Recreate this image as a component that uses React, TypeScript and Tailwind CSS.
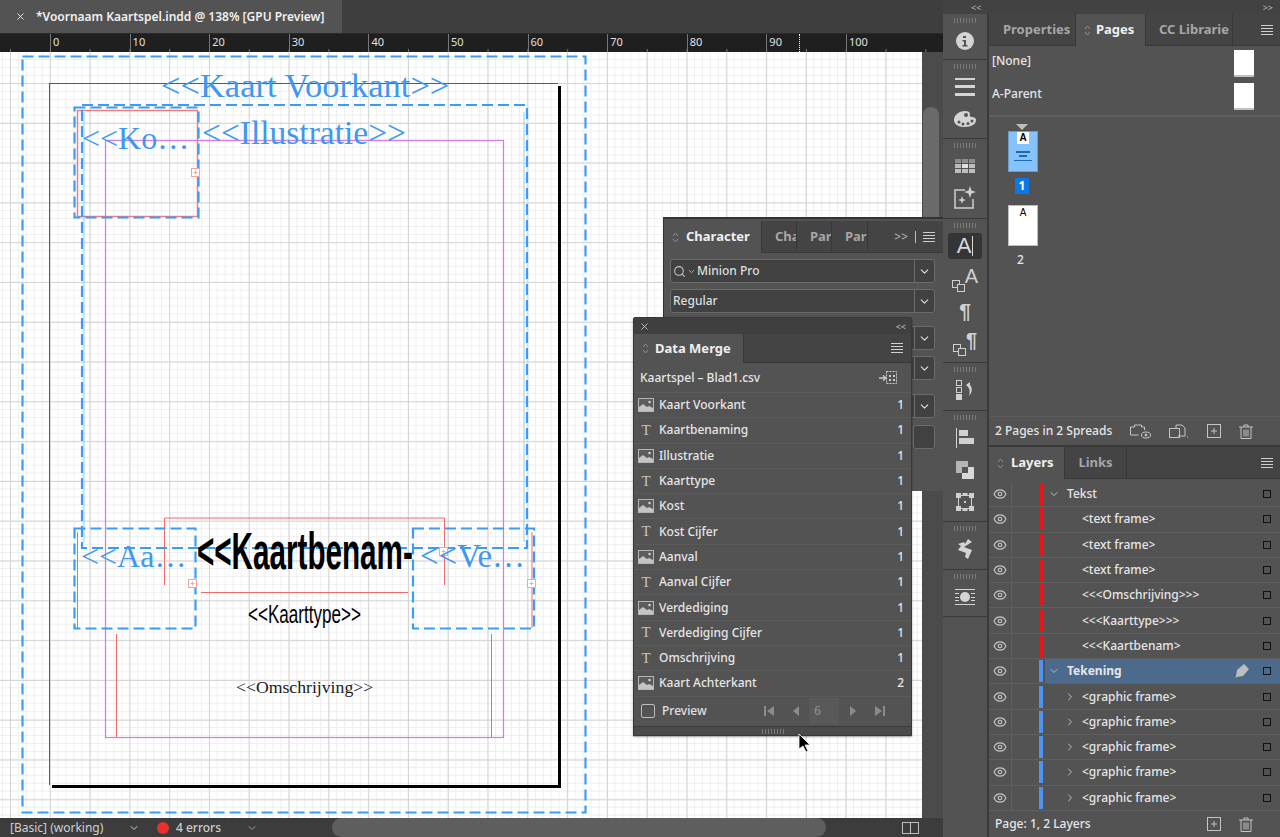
import { ChevronDown, ChevronRight, Eye, Search, X } from 'lucide-react';
import type { ReactNode } from 'react';

const rulerMarks = [0, 10, 20, 30, 40, 50, 60, 70, 80, 90, 100];

const mergeFields = [
  { name: 'Kaart Voorkant', kind: 'image', count: 1 },
  { name: 'Kaartbenaming', kind: 'text', count: 1 },
  { name: 'Illustratie', kind: 'image', count: 1 },
  { name: 'Kaarttype', kind: 'text', count: 1 },
  { name: 'Kost', kind: 'image', count: 1 },
  { name: 'Kost Cijfer', kind: 'text', count: 1 },
  { name: 'Aanval', kind: 'image', count: 1 },
  { name: 'Aanval Cijfer', kind: 'text', count: 1 },
  { name: 'Verdediging', kind: 'image', count: 1 },
  { name: 'Verdediging Cijfer', kind: 'text', count: 1 },
  { name: 'Omschrijving', kind: 'text', count: 1 },
  { name: 'Kaart Achterkant', kind: 'image', count: 2 },
];

const layers = [
  { name: 'Tekst', color: 'bg-[#e8161b]', level: 0, open: true },
  { name: '<text frame>', color: 'bg-[#e8161b]', level: 1 },
  { name: '<text frame>', color: 'bg-[#e8161b]', level: 1 },
  { name: '<text frame>', color: 'bg-[#e8161b]', level: 1 },
  { name: '<<<Omschrijving>>>', color: 'bg-[#e8161b]', level: 1 },
  { name: '<<<Kaarttype>>>', color: 'bg-[#e8161b]', level: 1 },
  { name: '<<<Kaartbenam>', color: 'bg-[#e8161b]', level: 1 },
  { name: 'Tekening', color: 'bg-[#4f94f0]', level: 0, open: true, active: true },
  { name: '<graphic frame>', color: 'bg-[#4f94f0]', level: 1, closed: true },
  { name: '<graphic frame>', color: 'bg-[#4f94f0]', level: 1, closed: true },
  { name: '<graphic frame>', color: 'bg-[#4f94f0]', level: 1, closed: true },
  { name: '<graphic frame>', color: 'bg-[#4f94f0]', level: 1, closed: true },
  { name: '<graphic frame>', color: 'bg-[#4f94f0]', level: 1, closed: true },
];

function Menu() {
  return (
    <div className="flex flex-col gap-[2px]">
      <div className="h-px w-3 bg-[#cfcfcf]" />
      <div className="h-px w-3 bg-[#cfcfcf]" />
      <div className="h-px w-3 bg-[#cfcfcf]" />
      <div className="h-px w-3 bg-[#cfcfcf]" />
    </div>
  );
}

function UpDown() {
  return (
    <svg width="7" height="11" viewBox="0 0 7 11" fill="none" stroke="#8f8f8f" strokeWidth="1">
      <path d="M1 4l2.5-3L6 4M1 7l2.5 3L6 7" />
    </svg>
  );
}

function Grip() {
  return <div className="h-[5px] w-[22px] shrink-0 bg-[repeating-linear-gradient(90deg,#7a7a7a_0_1px,transparent_1px_3px)]" />;
}

function ImageIcon() {
  return (
    <svg width="16" height="14" viewBox="0 0 16 14">
      <rect x="0.5" y="0.5" width="15" height="13" fill="#5c5c5c" stroke="#b5b5b5" />
      <path d="M1 13V9l4-3 4 3 2-1 4 2v3z" fill="#c4c4c4" />
      <circle cx="11.5" cy="4" r="1.2" fill="#d8d8d8" />
    </svg>
  );
}

function PanelTab({ children, active, className }: { children: ReactNode; active?: boolean; className: string }) {
  return (
    <div
      className={`flex h-full items-center border-r border-[#383838] text-[13px] font-bold ${
        active ? 'bg-[#535353] text-[#efefef]' : 'border-b bg-[#444444] text-[#a6a6a6]'
      } ${className}`}
    >
      {children}
    </div>
  );
}

function SelectBox({ children }: { children?: ReactNode }) {
  return (
    <div className="flex h-6 items-center rounded-[3px] border border-[#6b6b6b] bg-[#414141] text-xs text-[#dedede]">
      <div className="flex flex-1 items-center gap-[1px] overflow-hidden px-[2px]">{children}</div>
      <div className="flex h-full w-[20px] items-center justify-center border-l border-[#6b6b6b]">
        <ChevronDown size={13} className="text-[#e0e0e0]" />
      </div>
    </div>
  );
}

function Artwork() {
  return (
    <div className="absolute -top-[52px] left-0 h-[837px] w-[922px]">
      <div className="absolute left-[49px] top-[83px] h-[702px] w-[509px] border-l border-t border-[#5b5b5b] shadow-[3px_3px_0_0_#000]" />
      <svg className="absolute left-0 top-0" width="922" height="837" fill="none">
        <rect x="105.5" y="140.5" width="398" height="597" stroke="#d27ae8" strokeWidth="1.2" />
        <path d="M116.5 634v103M491.5 634v103" stroke="#ef6a6a" />
        <path d="M164.5 585v-67h280v67M201 592.5h207" stroke="#ef6a6a" />
        <path d="M84 112v430M524 112v430" stroke="#9cc8f5" />
        <rect x="77.5" y="110.5" width="120" height="106" stroke="#f47c7c" strokeWidth="1.5" />
        <path d="M77.5 532v96M532 532v96" stroke="#ef6a6a" />
        <g stroke="#3a9cf7" strokeWidth="2.2" strokeDasharray="11 5">
          <rect x="22.5" y="56.5" width="563" height="756" />
          <rect x="82" y="105" width="445" height="443" />
          <rect x="74.5" y="107.5" width="124" height="110" />
          <rect x="74.5" y="528.5" width="121" height="100" />
          <rect x="413" y="528.5" width="121" height="100" />
        </g>
        <g fill="#fff" stroke="#f5a3a3">
          <rect x="191.5" y="168.5" width="8" height="8" />
          <rect x="188.5" y="579.5" width="8" height="8" />
          <rect x="527.5" y="579.5" width="8" height="8" />
          <rect x="439.5" y="547.5" width="8" height="8" />
          <path d="M195.5 170.5v4M193.5 172.5h4M192.500 581.500v4M190.500 583.500h4M531.500 581.500v4M529.500 583.500h4M443.500 549.500v4M441.500 551.500h4" />
        </g>
      </svg>
      <div className="absolute left-[161px] top-[66px] whitespace-nowrap font-['Liberation_Serif',serif] text-[34.5px] leading-[38px] text-[#3f98f0]">
        {'<<Kaart Voorkant>>'}
      </div>
      <div className="absolute left-[82px] top-[119px] whitespace-nowrap font-['Liberation_Serif',serif] text-[32px] leading-[38px] text-[#3f98f0]">
        {'<<Ko…'}
      </div>
      <div className="absolute left-[202px] top-[114px] whitespace-nowrap font-['Liberation_Serif',serif] text-[33.5px] leading-[38px] text-[#3f98f0]">
        {'<<Illustratie>>'}
      </div>
      <div className="absolute left-[81px] top-[537px] whitespace-nowrap font-['Liberation_Serif',serif] text-[32px] leading-[38px] text-[#3f98f0]">
        {'<<Aa…'}
      </div>
      <div className="absolute left-[420px] top-[537px] whitespace-nowrap font-['Liberation_Serif',serif] text-[33px] leading-[38px] text-[#3f98f0]">
        {'<<Ve…'}
      </div>
      <div className="absolute left-[197px] top-[523px] origin-left scale-x-[0.57] whitespace-nowrap font-['Liberation_Sans',sans-serif] text-[52px] font-bold leading-[56px] text-black">
        {'<<Kaartbenam-'}
      </div>
      <div className="absolute left-[248px] top-[601px] origin-left scale-x-[0.656] whitespace-nowrap font-['Liberation_Sans',sans-serif] text-[26px] leading-[26px] text-black">
        {'<<Kaarttype>>'}
      </div>
      <div className="absolute left-[236px] top-[677px] whitespace-nowrap font-['Liberation_Serif',serif] text-[17.7px] leading-[20px] text-[#1a1a1a]">
        {'<<Omschrijving>>'}
      </div>
    </div>
  );
}

function CharacterPanel() {
  return (
    <div className="absolute left-[663px] top-[217px] h-[274px] w-[280px] border-l border-t-2 border-[#333333] bg-[#535353] pt-[2px] font-['Noto_Sans',sans-serif]">
      <div className="flex h-[32px] bg-[#444444]">
        <PanelTab active className="w-[98px] gap-[7px] pl-2">
          <UpDown />
          <span>Character</span>
        </PanelTab>
        <PanelTab className="w-[35px] overflow-hidden pl-[13px]">Cha</PanelTab>
        <PanelTab className="w-[35px] overflow-hidden pl-[13px]">Par</PanelTab>
        <PanelTab className="w-[36px] overflow-hidden pl-[13px]">Par</PanelTab>
        <div className="flex flex-1 items-center justify-end gap-[7px] border-b border-[#383838] pr-2 text-xs text-[#bdbdbd]">
          <span>{'>>'}</span>
          <div className="h-3 w-px bg-[#bdbdbd]" />
          <Menu />
        </div>
      </div>
      <div className="flex flex-col gap-[6px] pl-[6px] pr-[8px] pt-[6px]">
        <SelectBox>
          <Search size={13} className="shrink-0 text-[#c8c8c8]" />
          <ChevronDown size={9} className="shrink-0 text-[#c8c8c8]" />
          <span className="font-medium">Minion Pro</span>
        </SelectBox>
        <SelectBox>
          <span className="font-medium">Regular</span>
        </SelectBox>
      </div>
      <div className="absolute right-[8px] top-[107px] flex flex-col gap-[6px]">
        <SelectBox />
        <SelectBox />
      </div>
      <div className="absolute right-[8px] top-[175px]">
        <SelectBox />
      </div>
      <div className="absolute right-[8px] top-[206px] h-6 w-[22px] rounded-[3px] border border-[#6b6b6b] bg-[#414141]" />
    </div>
  );
}

function DataMergePanel() {
  return (
    <div className="absolute left-[633px] top-[317px] flex h-[419px] w-[279px] flex-col rounded-t-[2px] border border-[#383838] bg-[#535353] font-['Noto_Sans',sans-serif] shadow-[0_1px_2px_rgba(0,0,0,0.4)]">
      <div className="flex h-[16px] items-center justify-between bg-[#3f3f3f] px-[5px] text-[#c4c4c4]">
        <X size={11} />
        <span className="text-[9px] leading-none">{'<<'}</span>
      </div>
      <div className="flex h-[29px] bg-[#444444]">
        <PanelTab active className="w-[110px] gap-[6px] pl-2">
          <UpDown />
          <span>Data Merge</span>
        </PanelTab>
        <div className="flex flex-1 items-center justify-end border-b border-[#383838] pr-2">
          <Menu />
        </div>
      </div>
      <div className="flex h-[30px] items-center justify-between border-b border-[#5c5c5c] pl-[6px] pr-[14px] text-xs font-medium text-[#e6e6e6]">
        <span>Kaartspel – Blad1.csv</span>
        <svg width="18" height="13" viewBox="0 0 18 13" fill="none" stroke="#c8c8c8">
          <path d="M0 7h6M4 4.5L7 7l-3 2.5" strokeWidth="1.5" />
          <rect x="7.5" y="0.5" width="10" height="12" strokeDasharray="2 1" />
          <path d="M10 4h2v2h-2zM14 4h2v2h-2zM10 8h2v2h-2zM14 8h2v2h-2z" fill="#c8c8c8" stroke="none" />
        </svg>
      </div>
      {mergeFields.map((field) => (
        <div
          key={field.name}
          className="flex h-[25.3px] shrink-0 items-center border-b border-[#5a5a5a] pl-[4px] pr-[7px] text-xs font-medium text-[#e6e6e6]"
        >
          <div className="flex w-[21px] justify-start">
            {field.kind === 'image' ? (
              <ImageIcon />
            ) : (
              <span className="w-4 text-center font-['Liberation_Serif',serif] text-[15px] leading-none text-[#c4c4c4]">T</span>
            )}
          </div>
          <span className="flex-1">{field.name}</span>
          <span>{field.count}</span>
        </div>
      ))}
      <div className="flex flex-1 items-center pl-[7px] text-xs font-medium text-[#e0e0e0]">
        <div className="h-[14px] w-[14px] rounded-[2px] border border-[#bdbdbd]" />
        <span className="ml-[7px] w-[61px]">Preview</span>
        <div className="ml-[40px] flex items-center text-[#8b8b8b]">
          <svg width="12" height="10" viewBox="0 0 12 10" fill="#8b8b8b">
            <path d="M1 0h2v10H1zM11 0v10L4 5z" />
          </svg>
          <svg className="ml-[17px]" width="8" height="10" viewBox="0 0 8 10" fill="#8b8b8b">
            <path d="M7 0v10L1 5z" />
          </svg>
          <div className="ml-[9px] flex h-[26px] w-[30px] items-center bg-[#595959] pl-[5px]">6</div>
          <svg className="ml-[10px]" width="8" height="10" viewBox="0 0 8 10" fill="#8b8b8b">
            <path d="M1 0v10l6-5z" />
          </svg>
          <svg className="ml-[17px]" width="12" height="10" viewBox="0 0 12 10" fill="#8b8b8b">
            <path d="M9 0h2v10H9zM1 0v10l7-5z" />
          </svg>
        </div>
      </div>
      <div className="flex h-[9px] items-center justify-center border-t border-[#3a3a3a] bg-[#4a4a4a]">
        <Grip />
      </div>
    </div>
  );
}

const stripIcons: { h: string; icons: ReactNode[] }[] = [
  {
    h: 'h-[46px]',
    icons: [
      <svg key="info" width="20" height="20" viewBox="0 0 20 20">
        <circle cx="10" cy="10" r="9" fill="#d4d4d4" />
        <path d="M8 5h3v2H8zM7.500 9h3.500v5h1.500v1.500h-5V14H9v-3.500H7.500z" fill="#535353" />
      </svg>,
    ],
  },
  {
    h: 'h-[79px]',
    icons: [
      <div key="lines" className="flex flex-col gap-[5px]">
        <div className="h-[2px] w-5 bg-[#d4d4d4]" />
        <div className="h-[3px] w-5 bg-[#d4d4d4]" />
        <div className="h-[3px] w-5 bg-[#d4d4d4]" />
      </div>,
      <svg key="palette" width="24" height="18" viewBox="0 0 24 18">
        <path d="M12 1C6 1 1 5 1 10c0 4 4 7 10 7 8 0 12-3 12-7 0-2-2-3-4-3-2 0-3-1-2-3 0-2-2-3-5-3z" fill="#d4d4d4" />
        <circle cx="6" cy="12" r="1.5" fill="#535353" />
        <circle cx="10" cy="14" r="1.5" fill="#535353" />
        <circle cx="15" cy="13.500" r="1.5" fill="#535353" />
        <circle cx="19" cy="11" r="1.5" fill="#535353" />
        <circle cx="13" cy="5" r="2" fill="#535353" />
      </svg>,
    ],
  },
  {
    h: 'h-[80px]',
    icons: [
      <svg key="swatches" width="20" height="14" viewBox="0 0 20 14" fill="#bdbdbd">
        <path d="M0 0h6v4H0zM7 0h6v4H7zM14 0h6v4h-6z" fill="#8d8d8d" />
        <path d="M0 5h6v4H0zM14 5h6v4h-6zM0 10h6v4H0zM7 10h6v4H7zM14 10h6v4h-6z" />
        <path d="M7 5h6v4H7z" fill="#e0e0e0" />
      </svg>,
      <svg key="spark" width="24" height="24" viewBox="0 0 24 24" fill="none">
        <path d="M12 4H2v18h18v-9" stroke="#d0d0d0" strokeWidth="1.5" />
        <path d="M17 0l1.500 4.500L23 6l-4.500 1.500L17 12l-1.500-4.500L11 6l4.500-1.500zM9 10l1 3 3 1-3 1-1 3-1-3-3-1 3-1z" fill="#d0d0d0" />
      </svg>,
    ],
  },
  {
    h: 'h-[144px]',
    icons: [
      <div key="char" className="flex h-[26px] w-[34px] items-center justify-center rounded-[3px] bg-[#353535] font-['Liberation_Sans',sans-serif] text-[22px] leading-none text-[#d8d8d8]">
        A<span className="ml-[1px] h-5 w-px bg-[#d8d8d8]" />
      </div>,
      <div key="charstyle" className="flex items-end font-['Liberation_Sans',sans-serif] text-[20px] leading-none text-[#d0d0d0]">
        <span className="mb-[2px] h-2 w-2 border border-[#d0d0d0]" />
        <span className="-mb-[2px] -ml-[3px] h-2 w-2 border border-[#d0d0d0] bg-[#535353]" />
        <span className="mb-[4px]">A</span>
      </div>,
      <span key="para" className="font-['Liberation_Sans',sans-serif] text-[21px] font-bold leading-none text-[#d0d0d0]">¶</span>,
      <div key="parastyle" className="flex items-end font-['Liberation_Sans',sans-serif] text-[20px] font-bold leading-none text-[#d0d0d0]">
        <span className="mb-[2px] h-2 w-2 border border-[#d0d0d0]" />
        <span className="-mb-[2px] -ml-[3px] h-2 w-2 border border-[#d0d0d0] bg-[#535353]" />
        <span className="mb-[4px]">¶</span>
      </div>,
    ],
  },
  {
    h: 'h-[48px]',
    icons: [
      <svg key="order" width="18" height="20" viewBox="0 0 18 20" fill="none" stroke="#d0d0d0">
        <rect x="0.5" y="0.5" width="5" height="5" />
        <rect x="0.5" y="7.5" width="5" height="5" />
        <rect x="0.5" y="14.500" width="5" height="5" fill="#d0d0d0" />
        <path d="M10 5l4-3v3c3 3 2 8-1 11 1-4 1-7-1-9z" fill="#d0d0d0" stroke="none" />
      </svg>,
    ],
  },
  {
    h: 'h-[111px]',
    icons: [
      <svg key="align" width="18" height="20" viewBox="0 0 18 20" fill="#d0d0d0">
        <path d="M0 0h1v20H0zM3 2h9v6H3zM3 10h15v6H3z" />
      </svg>,
      <svg key="pathfinder" width="18" height="18" viewBox="0 0 18 18">
        <path d="M0 0h12v12H0z" fill="#b5b5b5" />
        <path d="M6 6h12v12H6z" fill="#d8d8d8" />
        <path d="M6 6h6v6H6z" fill="#535353" />
      </svg>,
      <svg key="transform" width="18" height="18" viewBox="0 0 18 18" fill="none" stroke="#d0d0d0">
        <rect x="2.500" y="2.500" width="13" height="13" />
        <path d="M0 0h5v5H0zM13 0h5v5h-5zM0 13h5v5H0zM13 13h5v5h-5zM6.500 0h5v3h-5zM6.500 15h5v3h-5z" fill="#d0d0d0" stroke="none" />
        <rect x="8" y="8" width="2" height="2" fill="#d0d0d0" stroke="none" />
      </svg>,
    ],
  },
  {
    h: 'h-[48px]',
    icons: [
      <svg key="story" width="18" height="20" viewBox="0 0 18 20" fill="#d4d4d4">
        <path d="M12 0l4 3-8 5 8 3-4 9-3-2 1-4-8-3 3-4-3-2 6-2 1 2z" />
      </svg>,
    ],
  },
  {
    h: 'h-[47px]',
    icons: [
      <svg key="wrap" width="20" height="16" viewBox="0 0 20 16" fill="#d4d4d4">
        <path d="M0 0h20v1H0zM0 15h20v1H0zM0 4h4v1H0zM16 4h4v1h-4zM0 8h4v1H0zM16 8h4v1h-4zM0 11h4v1H0zM16 11h4v1h-4z" />
        <circle cx="10" cy="8" r="5" />
      </svg>,
    ],
  },
];

function IconStrip() {
  return (
    <div className="flex w-[45px] shrink-0 flex-col border-r border-[#3a3a3a]">
      {stripIcons.map((group, i) => (
        <div key={i} className={`flex shrink-0 flex-col items-center border-b border-[#3a3a3a] pt-[4px] ${group.h}`}>
          <Grip />
          <div className="mt-[2px] flex w-full flex-col items-center">
            {group.icons.map((icon, j) => (
              <div key={j} className="flex h-8 w-full shrink-0 items-center justify-center">
                {icon}
              </div>
            ))}
          </div>
        </div>
      ))}
    </div>
  );
}

function FooterIcons({ children }: { children?: ReactNode }) {
  return (
    <div className="flex items-center gap-[18px]">
      {children}
      <svg width="14" height="14" viewBox="0 0 14 14" fill="none" stroke="#c4c4c4">
        <rect x="0.5" y="0.5" width="13" height="13" />
        <path d="M7 4v6M4 7h6" />
      </svg>
      <svg width="14" height="15" viewBox="0 0 14 15" fill="none" stroke="#c4c4c4">
        <path d="M0 3h14M5 3V1h4v2M2 3v11.500h10V3M5 5.500v7M7 5.500v7M9 5.500v7" />
      </svg>
    </div>
  );
}

function PagesPanel() {
  return (
    <div className="flex h-[431px] flex-col font-['Noto_Sans',sans-serif]">
      <div className="flex h-[32px] shrink-0 bg-[#444444] text-[13px]">
        <PanelTab className="w-[87px] pl-[14px]">Properties</PanelTab>
        <PanelTab active className="w-[70px] gap-[5px] pl-2">
          <UpDown />
          <span>Pages</span>
        </PanelTab>
        <PanelTab className="w-[87px] overflow-hidden whitespace-nowrap pl-[13px]">CC Librarie</PanelTab>
        <div className="flex flex-1 items-center justify-end border-b border-[#383838] pr-[7px]">
          <Menu />
        </div>
      </div>
      <div className="flex h-[71px] shrink-0 flex-col gap-[6px] border-b-2 border-[#5f5f5f] pl-[3px] pr-[26px] pt-[4px] text-xs font-medium text-[#e6e6e6]">
        <div className="flex items-center justify-between">
          <span className="mb-[6px]">[None]</span>
          <div className="h-[27px] w-5 border-b-2 border-[#c0c0c0] bg-white" />
        </div>
        <div className="flex items-center justify-between">
          <span className="mb-[6px]">A-Parent</span>
          <div className="h-[27px] w-5 border-b-2 border-[#c0c0c0] bg-white" />
        </div>
      </div>
      <div className="flex flex-1 flex-col items-start pl-[19px] pt-[7px]">
        <div className="ml-[8px] h-0 w-0 border-x-[6px] border-t-[6px] border-x-transparent border-t-[#bdbdbd]" />
        <div className="mt-[1px] flex h-[41px] w-[30px] flex-col items-center border border-[#6b9bc8] bg-[#86c2fb]">
          <div className="bg-white px-[2px] font-['Liberation_Sans',sans-serif] text-[10px] font-bold leading-[12px] text-black">A</div>
          <div className="mt-[7px] h-[2px] w-[14px] bg-[#1c6bb0]" />
          <div className="mt-[2px] h-[2px] w-[8px] bg-[#1c6bb0]" />
          <div className="mt-[3px] h-px w-[18px] bg-[#1c6bb0]" />
        </div>
        <div className="ml-[7px] mt-[6px] w-[14px] bg-[#0a78e6] text-center text-xs font-bold leading-[16px] text-white">1</div>
        <div className="mt-[11px] flex h-[41px] w-[30px] justify-center border border-[#bdbdbd] bg-white font-['Liberation_Sans',sans-serif] text-[10px] leading-[14px] text-black">
          A
        </div>
        <div className="ml-[9px] mt-[6px] text-xs font-medium text-[#e6e6e6]">2</div>
      </div>
      <div className="flex h-[29px] shrink-0 items-center justify-between border-t border-[#5c5c5c] pl-[6px] pr-[27px] text-xs font-medium text-[#e6e6e6]">
        <span>2 Pages in 2 Spreads</span>
        <FooterIcons>
          <svg width="21" height="15" viewBox="0 0 21 15" fill="none" stroke="#c4c4c4">
            <path d="M0.500 11V3h4V1h7v2h3v3M0.500 11h8" />
            <ellipse cx="16" cy="11" rx="4.500" ry="3" />
            <circle cx="16" cy="11" r="1" fill="#c4c4c4" />
          </svg>
          <svg width="20" height="14" viewBox="0 0 20 14" fill="none" stroke="#c4c4c4">
            <path d="M7 4V1h6l3 3v8H9" />
            <rect x="0.500" y="4.500" width="10" height="9" />
            <path d="M18 13h1" />
          </svg>
        </FooterIcons>
      </div>
    </div>
  );
}

function LayersPanel() {
  return (
    <div className="flex flex-1 flex-col border-t-2 border-[#3a3a3a] font-['Noto_Sans',sans-serif]">
      <div className="flex h-[32px] shrink-0 bg-[#444444]">
        <PanelTab active className="w-[76px] gap-[7px] pl-2">
          <UpDown />
          <span>Layers</span>
        </PanelTab>
        <PanelTab className="w-[62px] justify-center">Links</PanelTab>
        <div className="flex flex-1 items-center justify-end border-b border-[#383838] pr-[7px]">
          <Menu />
        </div>
      </div>
      <div className="flex flex-1 flex-col pt-[3px]">
        {layers.map((layer, i) => (
          <div key={i} className="flex h-[25.3px] shrink-0 items-center border-b border-[#5f5f5f] text-xs font-medium text-[#e6e6e6]">
            <div className="flex h-full w-[23px] shrink-0 items-center justify-center border-r border-[#5f5f5f]">
              <Eye size={14} className="text-[#c4c4c4]" />
            </div>
            <div className="w-[27px] shrink-0" />
            <div className={`h-[22px] w-[4px] shrink-0 ${layer.color}`} />
            <div className={`flex h-full min-w-0 flex-1 items-center pr-[9px] ${layer.active ? 'ml-[2px] bg-[#4b6a8c]' : 'ml-[2px]'}`}>
              {layer.level === 0 ? (
                <>
                  <ChevronDown size={12} className="ml-[3px] shrink-0 text-[#bdbdbd]" />
                  <span className={`ml-[7px] flex-1 ${layer.active ? 'font-bold' : ''}`}>{layer.name}</span>
                </>
              ) : (
                <span className={`flex flex-1 items-center ${layer.closed ? 'pl-[19px]' : 'pl-[37px]'}`}>
                  {layer.closed && <ChevronRight size={12} className="mr-[6px] shrink-0 text-[#bdbdbd]" />}
                  {layer.name}
                </span>
              )}
              {layer.active && (
                <svg className="mr-[14px]" width="14" height="14" viewBox="0 0 14 14" fill="#bdbdbd">
                  <path d="M9 0l5 5-6 7-6 1-2 1 1-2 1-6z" />
                </svg>
              )}
              <div className="h-2 w-2 shrink-0 border border-[#111111]" />
            </div>
          </div>
        ))}
      </div>
      <div className="flex h-[26px] shrink-0 items-center justify-between pl-[6px] pr-[27px] text-xs font-medium text-[#e6e6e6]">
        <span>Page: 1, 2 Layers</span>
        <FooterIcons />
      </div>
    </div>
  );
}

export default function App() {
  return (
    <div className="relative flex h-[837px] w-[1280px] overflow-hidden bg-[#535353]">
      <div className="flex w-[943px] shrink-0 flex-col">
        <div className="flex h-[33px] shrink-0 bg-[#3e3e3e]">
          <div className="flex w-[342px] items-center gap-[10px] bg-[#535353] pl-[15px] font-['Noto_Sans',sans-serif] text-xs font-semibold text-[#f0f0f0]">
            <X size={11} />
            <span>*Voornaam Kaartspel.indd @ 138% [GPU Preview]</span>
          </div>
        </div>
        <div className="relative flex h-[19px] shrink-0 border-t border-[#2a2a2a] bg-[#1f1f1f] pl-[50px] font-['Noto_Sans',sans-serif] text-[11px] leading-[15px] text-[#e0e0e0] [background-image:linear-gradient(90deg,#777777_1px,transparent_1px)] [background-position:10px_bottom] [background-repeat:repeat-x] [background-size:39.8px_3px]">
          {rulerMarks.map((mark) => (
            <div key={mark} className="w-[79.6px] shrink-0 border-l border-[#777777] pl-[2px]">
              {mark}
            </div>
          ))}
          <div className="absolute bottom-0 left-[799px] top-0 border-l border-dotted border-white" />
        </div>
        <div className="flex min-h-0 flex-1">
          <div className="relative w-[922px] shrink-0 overflow-hidden bg-white [background-image:linear-gradient(#d4d4d4_1px,transparent_1px),linear-gradient(90deg,#d4d4d4_1px,transparent_1px),linear-gradient(#efefef_1px,transparent_1px),linear-gradient(90deg,#efefef_1px,transparent_1px)] [background-position:0_31px,10px_0,0_7px,2px_0] [background-size:39.8px_39.8px,39.8px_39.8px,7.96px_7.96px,7.96px_7.96px]">
            <Artwork />
          </div>
          <div className="flex-1 bg-[#4b4b4b] pl-px pt-[55px]">
            <div className="h-[200px] w-[16px] rounded-t-lg bg-[#6a6a6a]" />
          </div>
        </div>
        <div className="flex h-[19px] shrink-0 items-center bg-[#3c3c3c] pl-[10px] font-['Noto_Sans',sans-serif] text-xs text-[#cfcfcf]">
          <span className="w-[118px]">[Basic] (working)</span>
          <ChevronDown size={12} />
          <div className="ml-[17px] h-3 w-3 rounded-full bg-[#e8322e]" />
          <span className="ml-[7px] w-[70px] font-medium">4 errors</span>
          <ChevronDown size={12} className="text-[#a0a0a0]" />
          <div className="ml-[74px] h-[19px] w-[494px] rounded-full bg-[#5e5e5e]" />
          <svg className="ml-[76px]" width="17" height="12" viewBox="0 0 17 12" fill="none" stroke="#bdbdbd">
            <rect x="0.5" y="0.5" width="16" height="11" />
            <path d="M8.500 0v12" />
          </svg>
        </div>
      </div>
      <div className="flex min-w-0 flex-1 flex-col">
        <div className="flex h-[14px] shrink-0 items-center justify-between bg-[#424242] pl-[28px] pr-[7px] text-[9px] leading-none text-[#bdbdbd]">
          <span>{'<<'}</span>
          <span>{'>>'}</span>
        </div>
        <div className="flex min-h-0 flex-1">
          <IconStrip />
          <div className="flex min-w-0 flex-1 flex-col border-l border-[#3a3a3a]">
            <PagesPanel />
            <LayersPanel />
          </div>
        </div>
      </div>
      <CharacterPanel />
      <DataMergePanel />
      <svg className="absolute left-[798px] top-[733px]" width="14" height="20" viewBox="0 0 14 20">
        <path d="M1 1v15l4-3 3 6 2-1-3-6h5z" fill="#000" stroke="#fff" strokeWidth="0.8" />
      </svg>
    </div>
  );
}
